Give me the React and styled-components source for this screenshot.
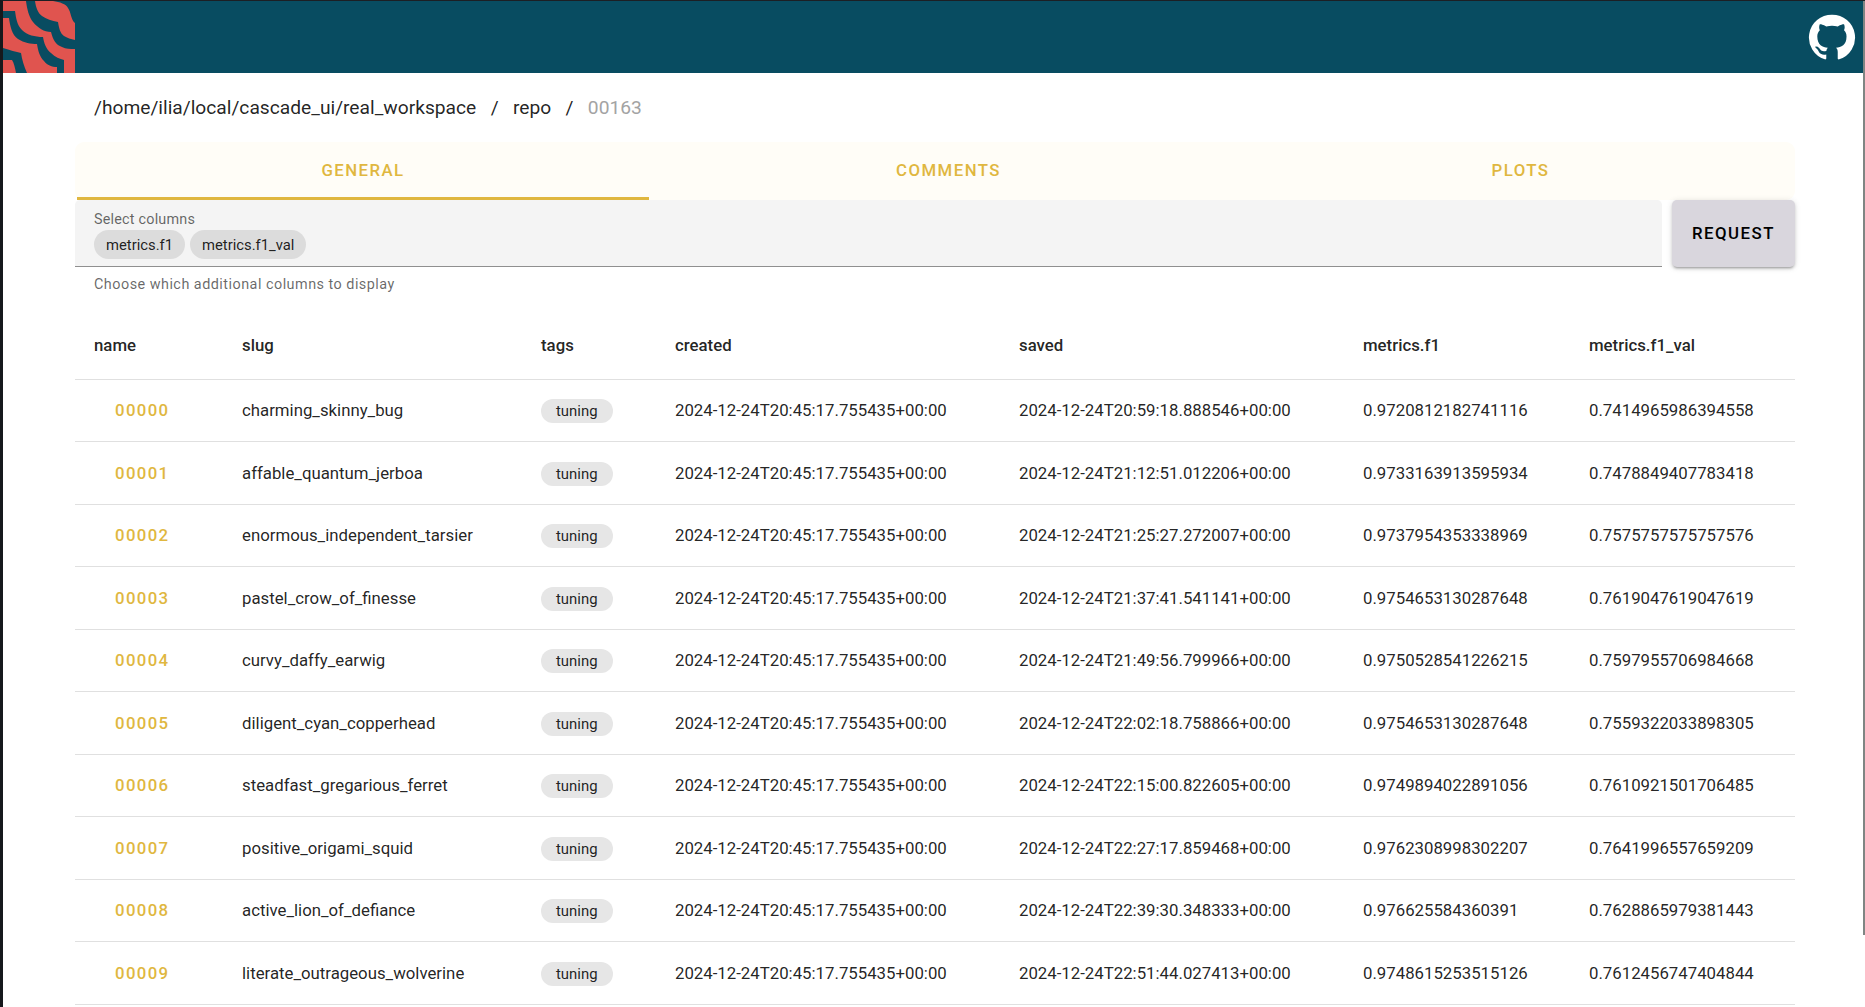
import styled, { createGlobalStyle } from "styled-components";

const GlobalStyle = createGlobalStyle`
  html, body {
    margin: 0;
    padding: 0;
    height: 100%;
    overflow: hidden;
    background: #fff;
    font-family: Roboto, "Liberation Sans", sans-serif;
    color: rgba(0, 0, 0, 0.87);
  }
`;

const runs = [
  ["00000", "charming_skinny_bug", "2024-12-24T20:59:18.888546+00:00", "0.9720812182741116", "0.7414965986394558"],
  ["00001", "affable_quantum_jerboa", "2024-12-24T21:12:51.012206+00:00", "0.9733163913595934", "0.7478849407783418"],
  ["00002", "enormous_independent_tarsier", "2024-12-24T21:25:27.272007+00:00", "0.9737954353338969", "0.7575757575757576"],
  ["00003", "pastel_crow_of_finesse", "2024-12-24T21:37:41.541141+00:00", "0.9754653130287648", "0.7619047619047619"],
  ["00004", "curvy_daffy_earwig", "2024-12-24T21:49:56.799966+00:00", "0.9750528541226215", "0.7597955706984668"],
  ["00005", "diligent_cyan_copperhead", "2024-12-24T22:02:18.758866+00:00", "0.9754653130287648", "0.7559322033898305"],
  ["00006", "steadfast_gregarious_ferret", "2024-12-24T22:15:00.822605+00:00", "0.9749894022891056", "0.7610921501706485"],
  ["00007", "positive_origami_squid", "2024-12-24T22:27:17.859468+00:00", "0.9762308998302207", "0.7641996557659209"],
  ["00008", "active_lion_of_defiance", "2024-12-24T22:39:30.348333+00:00", "0.976625584360391", "0.7628865979381443"],
  ["00009", "literate_outrageous_wolverine", "2024-12-24T22:51:44.027413+00:00", "0.9748615253515126", "0.7612456747404844"],
];

const columns = ["name", "slug", "tags", "created", "saved", "metrics.f1", "metrics.f1_val"];
const widths = [148, 299, 134, 344, 344, 226, 225];

function Logo() {
  return (
    <LogoSvg viewBox="3 1 72 72">
      <rect x="3" y="1" width="72" height="72" fill="#e0544f" />
      <g fill="#084c61">
        <path d="M53 1 C60 2 66 4 68 8 C71 12 71 20 75 23 L75 1 Z" />
        <path d="M26 1 L35 1 C36 8 38 13 42 16 C46 19 52 21 58 22 C59 28 60 33 64 36 C67 38 71 39 75 40 L75 49 C70 49 66 49 62 47 C56 45 53 40 51 32 C44 32 38 28 33 22 C29 17 27 9 26 1 Z" />
        <path d="M3 11 L15 11 C16 18 17 25 22 30 C27 35 35 37 43 37 C44 43 46 49 51 53 C55 57 60 59 64 60 L64 73 L57 73 L57 67 C52 67 47 65 44 61 C40 57 38 51 37 44 C31 44 24 43 18 39 C12 35 10 26 9 18 L3 18 Z" />
        <path d="M3 48 C10 50 16 52 21 53 C22 60 24 66 27 73 L16 73 C15 68 14 63 12 60 C9 60 6 60 3 60 Z" />
      </g>
    </LogoSvg>
  );
}

function GithubIcon() {
  return (
    <GithubSvg viewBox="0 0 24 24">
      <path
        fill="#fff"
        d="M12 1.27a11 11 0 00-3.48 21.46c.55.09.73-.28.73-.55v-1.84c-3.03.64-3.67-1.46-3.67-1.46-.55-1.29-1.28-1.65-1.28-1.65-.92-.65.1-.65.1-.65 1.1 0 1.73 1.1 1.73 1.1.92 1.65 2.57 1.2 3.21.92a2 2 0 01.64-1.47c-2.47-.27-5.04-1.19-5.04-5.5 0-1.1.46-2.1 1.2-2.84a3.76 3.76 0 010-2.93s.91-.28 3.11 1.1c1.8-.49 3.7-.49 5.5 0 2.1-1.38 3.02-1.1 3.02-1.1a3.76 3.76 0 010 2.93c.83.74 1.2 1.74 1.2 2.94 0 4.21-2.57 5.13-5.04 5.4.45.37.82.92.82 2.02v3.03c0 .27.1.64.73.55A11 11 0 0012 1.27"
      />
    </GithubSvg>
  );
}

export default function App() {
  return (
    <>
      <GlobalStyle />
      <Screen>
        <Page>
          <Header>
            <Logo />
            <GithubIcon />
          </Header>
          <Content>
            <Breadcrumbs>
              <Crumb>/home/ilia/local/cascade_ui/real_workspace</Crumb>
              <Separator>/</Separator>
              <Crumb>repo</Crumb>
              <Separator>/</Separator>
              <Crumb $current>00163</Crumb>
            </Breadcrumbs>
            <Tabs>
              <Tab $active>GENERAL</Tab>
              <Tab>COMMENTS</Tab>
              <Tab>PLOTS</Tab>
            </Tabs>
            <FilterRow>
              <SelectField>
                <SelectLabel>Select columns</SelectLabel>
                <ChipRow>
                  <Chip>metrics.f1</Chip>
                  <Chip>metrics.f1_val</Chip>
                </ChipRow>
              </SelectField>
              <RequestButton>REQUEST</RequestButton>
            </FilterRow>
            <HelperText>Choose which additional columns to display</HelperText>
            <Table>
              <colgroup>
                {widths.map((w, i) => (
                  <col key={i} width={w} />
                ))}
              </colgroup>
              <thead>
                <tr>
                  {columns.map((c) => (
                    <HeadCell key={c}>{c}</HeadCell>
                  ))}
                </tr>
              </thead>
              <tbody>
                {runs.map((r) => (
                  <tr key={r[0]}>
                    <NameCell>{r[0]}</NameCell>
                    <Cell>{r[1]}</Cell>
                    <Cell>
                      <TagChip>tuning</TagChip>
                    </Cell>
                    <Cell>2024-12-24T20:45:17.755435+00:00</Cell>
                    <Cell>{r[2]}</Cell>
                    <Cell>{r[3]}</Cell>
                    <Cell>{r[4]}</Cell>
                  </tr>
                ))}
              </tbody>
            </Table>
          </Content>
        </Page>
        <ScrollThumb />
      </Screen>
    </>
  );
}

const Screen = styled.div`
  position: relative;
  width: 1865px;
  height: 1007px;
  box-sizing: border-box;
  overflow: hidden;
  border-top: 1px solid #1c1f24;
  border-left: 3px solid #16181c;
  display: flex;
  background: #fff;
`;

const Page = styled.div`
  width: 1860px;
  flex: none;
`;

const ScrollThumb = styled.div`
  position: absolute;
  top: 0;
  right: 0;
  width: 2px;
  height: 934px;
  background: #7f8583;
`;

const Header = styled.header`
  height: 72px;
  background: #084c61;
  display: flex;
  align-items: center;
  justify-content: space-between;
  padding-right: 6px;
`;

const LogoSvg = styled.svg`
  width: 72px;
  height: 72px;
  display: block;
`;

const GithubSvg = styled.svg`
  width: 50px;
  height: 50px;
  display: block;
`;

const Content = styled.main`
  padding: 0 68px 0 72px;
`;

const Breadcrumbs = styled.nav`
  display: flex;
  align-items: center;
  height: 69px;
  padding-left: 19px;
  font-size: 19.200px;
  line-height: 28px;
`;

const Crumb = styled.span`
  color: ${(p) => (p.$current ? "#a3a3a3" : "rgba(0, 0, 0, 0.87)")};
`;

const Separator = styled.span`
  margin: 0 14.400px;
  color: rgba(0, 0, 0, 0.87);
`;

const Tabs = styled.div`
  display: grid;
  grid-template-columns: repeat(3, 572px);
  padding: 0 2px;
  height: 58px;
  background: #fffdf7;
  border-radius: 9px;
`;

const Tab = styled.div`
  display: flex;
  align-items: center;
  justify-content: center;
  box-sizing: border-box;
  color: #e0b73f;
  font-size: 16.800px;
  font-weight: 500;
  letter-spacing: 1.45px;
  border-bottom: 3px solid ${(p) => (p.$active ? "#e0b73f" : "transparent")};
  padding-left: ${(p) => (p.$active ? "0" : "27px")};
`;

const FilterRow = styled.div`
  display: flex;
  gap: 10px;
`;

const SelectField = styled.div`
  flex: 1;
  height: 67px;
  box-sizing: border-box;
  background: #f4f4f4;
  border-bottom: 1px solid #8f8f8f;
  border-radius: 5px 5px 0 0;
  padding: 11px 19px 0;
`;

const SelectLabel = styled.div`
  font-size: 14.400px;
  line-height: 17px;
  letter-spacing: 0.2px;
  color: rgba(0, 0, 0, 0.6);
`;

const ChipRow = styled.div`
  display: flex;
  gap: 5px;
  margin-top: 2px;
`;

const Chip = styled.span`
  display: inline-flex;
  align-items: center;
  height: 29px;
  padding: 0 12px;
  border-radius: 15px;
  background: #dcdcdc;
  font-size: 14.800px;
  color: rgba(0, 0, 0, 0.87);
`;

const RequestButton = styled.button`
  width: 123px;
  height: 67px;
  padding: 0 0 2px;
  border: none;
  border-radius: 5px;
  background: #d9d6dd;
  color: #000;
  font-family: inherit;
  font-size: 16.800px;
  font-weight: 500;
  letter-spacing: 1.5px;
  box-shadow: 0 3px 2px -2px rgba(0, 0, 0, 0.2), 0 2px 3px 0 rgba(0, 0, 0, 0.14), 0 1px 6px 0 rgba(0, 0, 0, 0.12);
`;

const HelperText = styled.div`
  padding: 8px 19px 0;
  font-size: 14.400px;
  line-height: 20px;
  letter-spacing: 0.48px;
  color: rgba(0, 0, 0, 0.6);
`;

const Table = styled.table`
  width: 1720px;
  table-layout: fixed;
  border-collapse: collapse;
  margin-top: 16px;
  font-size: 16.800px;
`;

const HeadCell = styled.th`
  height: 67.500px;
  padding: 0 0 0 19px;
  text-align: left;
  font-weight: 500;
  border-bottom: 1px solid #e0e0e0;
`;

const Cell = styled.td`
  height: 61.500px;
  padding: 0 0 0 19px;
  white-space: nowrap;
  border-bottom: 1px solid #e0e0e0;
`;

const NameCell = styled(Cell)`
  padding-left: 40px;
  color: #e0b73f;
  font-weight: 500;
  letter-spacing: 1.35px;
`;

const TagChip = styled.span`
  display: inline-flex;
  align-items: center;
  height: 24px;
  margin-top: 2px;
  padding: 0 15px;
  border-radius: 12px;
  background: #e6e6e6;
  font-size: 14.900px;
`;
